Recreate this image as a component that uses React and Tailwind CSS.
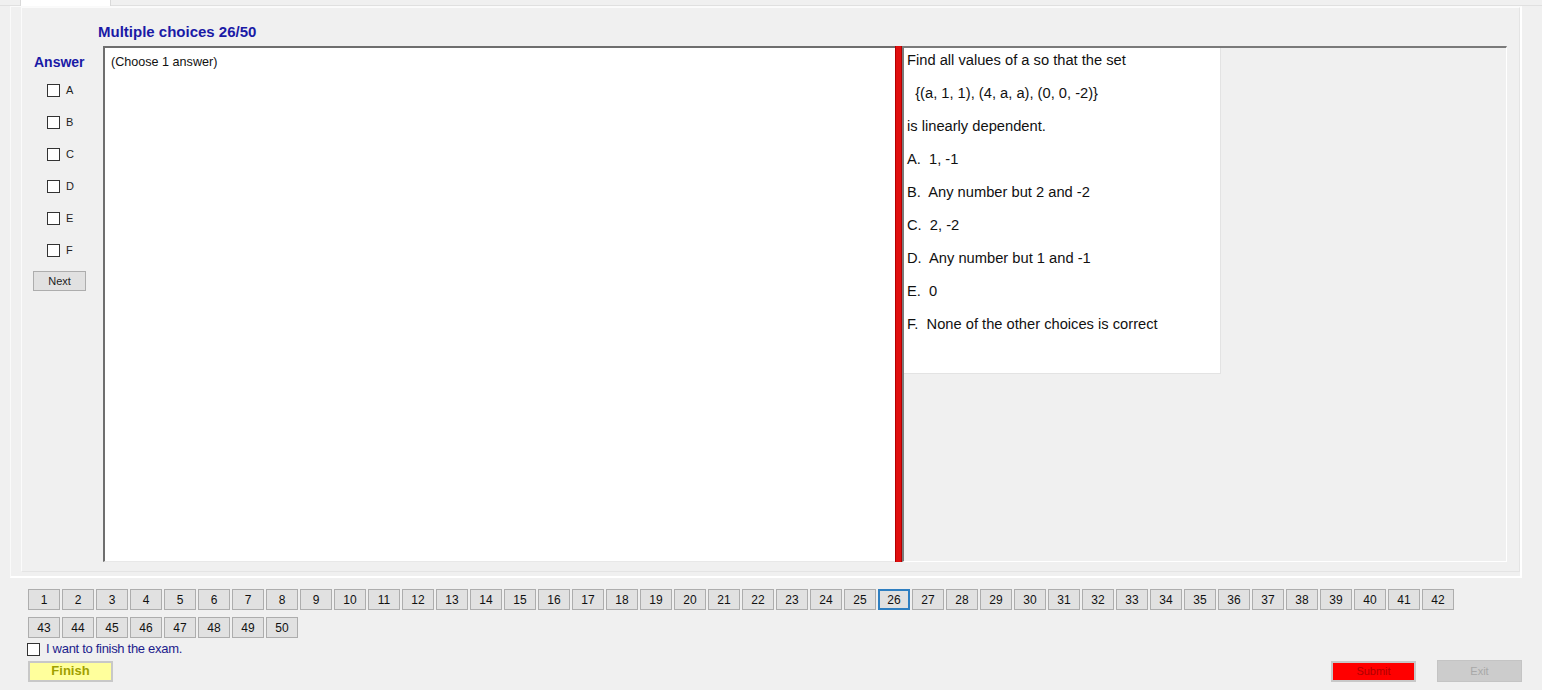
import React from "react";

const choices = ["A", "B", "C", "D", "E", "F"];

const lines = [
  "Find all values of a so that the set",
  "  {(a, 1, 1), (4, a, a), (0, 0, -2)}",
  "is linearly dependent.",
  "A.  1, -1",
  "B.  Any number but 2 and -2",
  "C.  2, -2",
  "D.  Any number but 1 and -1",
  "E.  0",
  "F.  None of the other choices is correct",
];

const row1 = Array.from({ length: 42 }, (_, i) => i + 1);
const row2 = Array.from({ length: 8 }, (_, i) => i + 43);

function NumButton({ n }) {
  const current = n === 26;
  return (
    <div
      className={`w-[32px] h-[21px] flex items-center justify-center text-[12px] text-[#111] bg-[#e1e1e1] ${
        current ? "border-2 border-[#2f7fc1]" : "border border-[#adadad]"
      }`}
    >
      {n}
    </div>
  );
}

function Box() {
  return <div className="w-[13px] h-[13px] border border-[#333] bg-white" />;
}

export default function App() {
  return (
    <div
      className="w-[1542px] h-[690px] bg-[#f0f0f0] flex flex-col overflow-hidden"
      style={{ fontFamily: '"Liberation Sans", Arial, sans-serif' }}
    >
      {/* tab strip */}
      <div className="h-[6px] flex border-b border-[#e0e0e0]">
        <div className="ml-[20px] w-[91px] h-[6px] bg-white border-x border-[#d9d9d9]" />
      </div>

      {/* tab page */}
      <div className="ml-[10px] w-[1512px] h-[572px] border-l border-t border-[#fafafa] border-r-2 border-b-2 border-r-[#ffffff] border-b-[#ffffff] flex flex-col">
        <div className="ml-[10px] h-[565px] border-l border-t border-[#fbfbfb] border-r border-b border-r-[#e4e4e4] border-b-[#e4e4e4] flex flex-col w-[1499px]">
          <div className="mt-[15px] ml-[76px] h-[18px] leading-[18px] text-[15px] font-bold text-[#1a1aa6]">
            Multiple choices 26/50
          </div>

          <div className="mt-[5px] flex h-[516px]">
            {/* answer column */}
            <div className="w-[81px] flex flex-col">
              <div className="mt-[8px] pl-[12px] h-[17px] leading-[17px] text-[14px] font-bold text-[#1a1aa6]">
                Answer
              </div>
              <div className="mt-[3px] flex flex-col pl-[25px]">
                {choices.map((c) => (
                  <div key={c} className="h-[32px] flex items-center gap-[6px]">
                    <Box />
                    <span className="text-[11px] text-[#222]">{c}</span>
                  </div>
                ))}
              </div>
              <div className="mt-[5px] ml-[11px] w-[53px] h-[20px] border border-[#adadad] bg-[#e1e1e1] flex items-center justify-center text-[11px] text-[#222]">
                Next
              </div>
            </div>

            {/* answer text box */}
            <div className="w-[792px] h-full bg-white border-t-2 border-l-2 border-[#6e6e6e] border-b border-b-[#e8e8e8]">
              <div className="pl-[6px] pt-[5px] text-[12.6px] text-[#111]">(Choose 1 answer)</div>
            </div>

            {/* splitter */}
            <div className="w-[7px] h-full bg-[#e00f0f] border-x border-[#b40000]" />

            {/* question panel */}
            <div className="w-[605px] h-full border-t-2 border-l-2 border-[#7a7a7a] border-r border-b border-r-white border-b-white">
              <div className="w-[317px] h-[326px] bg-white border-r border-b border-[#e3e3e3] pl-[3px] pt-[1px]">
                {lines.map((l, i) => (
                  <div
                    key={i}
                    className="h-[33px] leading-[22px] text-[14.7px] text-[#111] whitespace-pre"
                  >
                    {l}
                  </div>
                ))}
              </div>
            </div>
          </div>
        </div>
      </div>

      {/* question navigation */}
      <div className="mt-[11px] ml-[28px] flex gap-[2px]">
        {row1.map((n) => (
          <NumButton key={n} n={n} />
        ))}
      </div>
      <div className="mt-[7px] ml-[28px] flex gap-[2px]">
        {row2.map((n) => (
          <NumButton key={n} n={n} />
        ))}
      </div>

      <div className="mt-[2px] ml-[27px] flex items-center gap-[6px] h-[18px]">
        <Box />
        <span className="text-[13px] text-[#1c1c8c] tracking-[-0.3px]">I want to finish the exam.</span>
      </div>

      <div className="mt-[2px] ml-[28px] mr-[20px] flex items-center">
        <div className="w-[85px] h-[21px] bg-[#ffff9c] border-2 border-[#c8c8c8] flex items-center justify-center text-[13px] font-bold text-[#a0a000]">
          Finish
        </div>
        <div className="ml-auto w-[85px] h-[21px] bg-[#ff0000] border-2 border-[#c8c8c8] flex items-center justify-center text-[11px] text-[#b00000]">
          Submit
        </div>
        <div className="ml-[21px] w-[85px] h-[22px] bg-[#cccccc] border border-[#c4c4c4] flex items-center justify-center text-[11px] text-[#a8a8a8]">
          Exit
        </div>
      </div>
    </div>
  );
}
